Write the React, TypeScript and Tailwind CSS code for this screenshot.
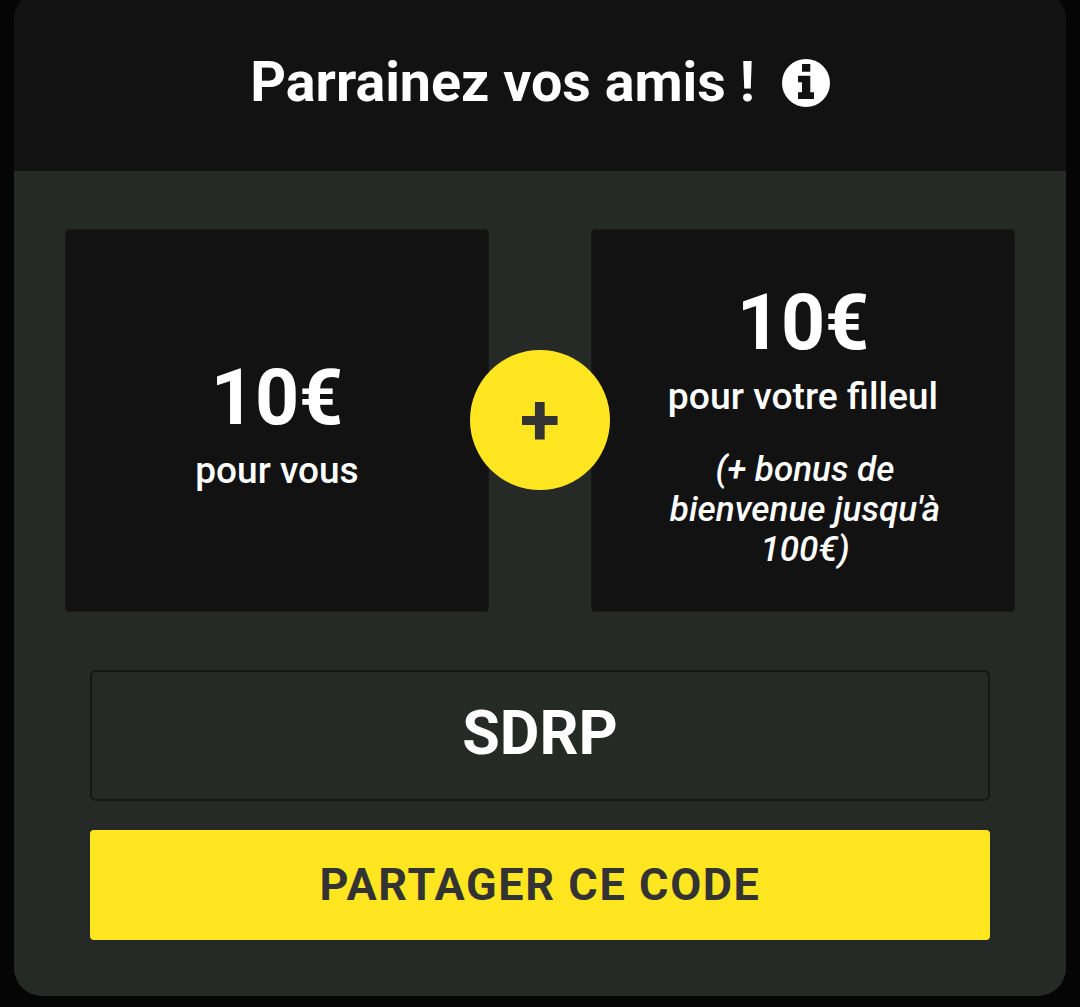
import React from 'react';

const InfoIcon = () => (
  <svg viewBox="0 0 48 48" className="size-[48px]" fill="currentColor">
    <path
      fillRule="evenodd"
      d="M24 0a24 24 0 1 0 0 48a24 24 0 1 0 0-48ZM20 5h8.3v7.7H20ZM16 16.7h12.3v16.6H32V40H16v-6.7h4v-10h-4Z"
    />
  </svg>
);

const RewardCard = ({ children }: { children: React.ReactNode }) => (
  <div className="flex h-[383px] w-[424px] flex-col items-center justify-center rounded border border-[#181a18] bg-[#121212] pt-[6px] text-center text-white">
    {children}
  </div>
);

const App = () => {
  return (
    <div className="h-[1007px] overflow-hidden bg-[#050505] px-[14px] font-['Roboto',sans-serif]">
      <div className="-mt-[8px] overflow-hidden rounded-[28px] bg-[#262a27]">
        <div className="flex h-[179px] items-center justify-center gap-[27px] bg-[#121212] pt-[2px] text-white">
          <h1 className="text-[55.6px] leading-none font-bold">Parrainez vos amis !</h1>
          <InfoIcon />
        </div>

        <div className="px-[51px] pt-[58px] pb-[56px]">
          <div className="relative flex justify-between">
            <RewardCard>
              <div className="mb-[4px] text-[77px] leading-[90px] font-bold">10€</div>
              <div className="text-[37px] leading-[48px] font-medium">pour vous</div>
            </RewardCard>
            <RewardCard>
              <div className="mb-[4px] text-[77px] leading-[90px] font-bold">10€</div>
              <div className="text-[37.3px] leading-[48px] font-medium">pour votre filleul</div>
              <div className="mt-[29px] w-[304px] pt-[1px] pl-[4px] text-[35px] leading-[40px] font-medium italic">
                (+ bonus de bienvenue jusqu'à 100€)
              </div>
            </RewardCard>
            <div className="absolute top-[121px] left-[405px] flex size-[140px] items-center justify-center rounded-full bg-[#ffe620] text-[73px] leading-none font-bold text-[#333333]">
              +
            </div>
          </div>

          <div className="mx-[25px] mt-[58px] flex h-[131px] items-center justify-center rounded-md border-2 border-[#151715] pb-[4px] text-[61px] font-bold text-white">
            SDRP
          </div>
          <button className="mx-[25px] mt-[29px] block h-[110px] w-[900px] rounded bg-[#ffe620] text-[45px] font-bold tracking-[1.6px] text-[#333333]">
            PARTAGER CE CODE
          </button>
        </div>
      </div>
    </div>
  );
};

export default App;
